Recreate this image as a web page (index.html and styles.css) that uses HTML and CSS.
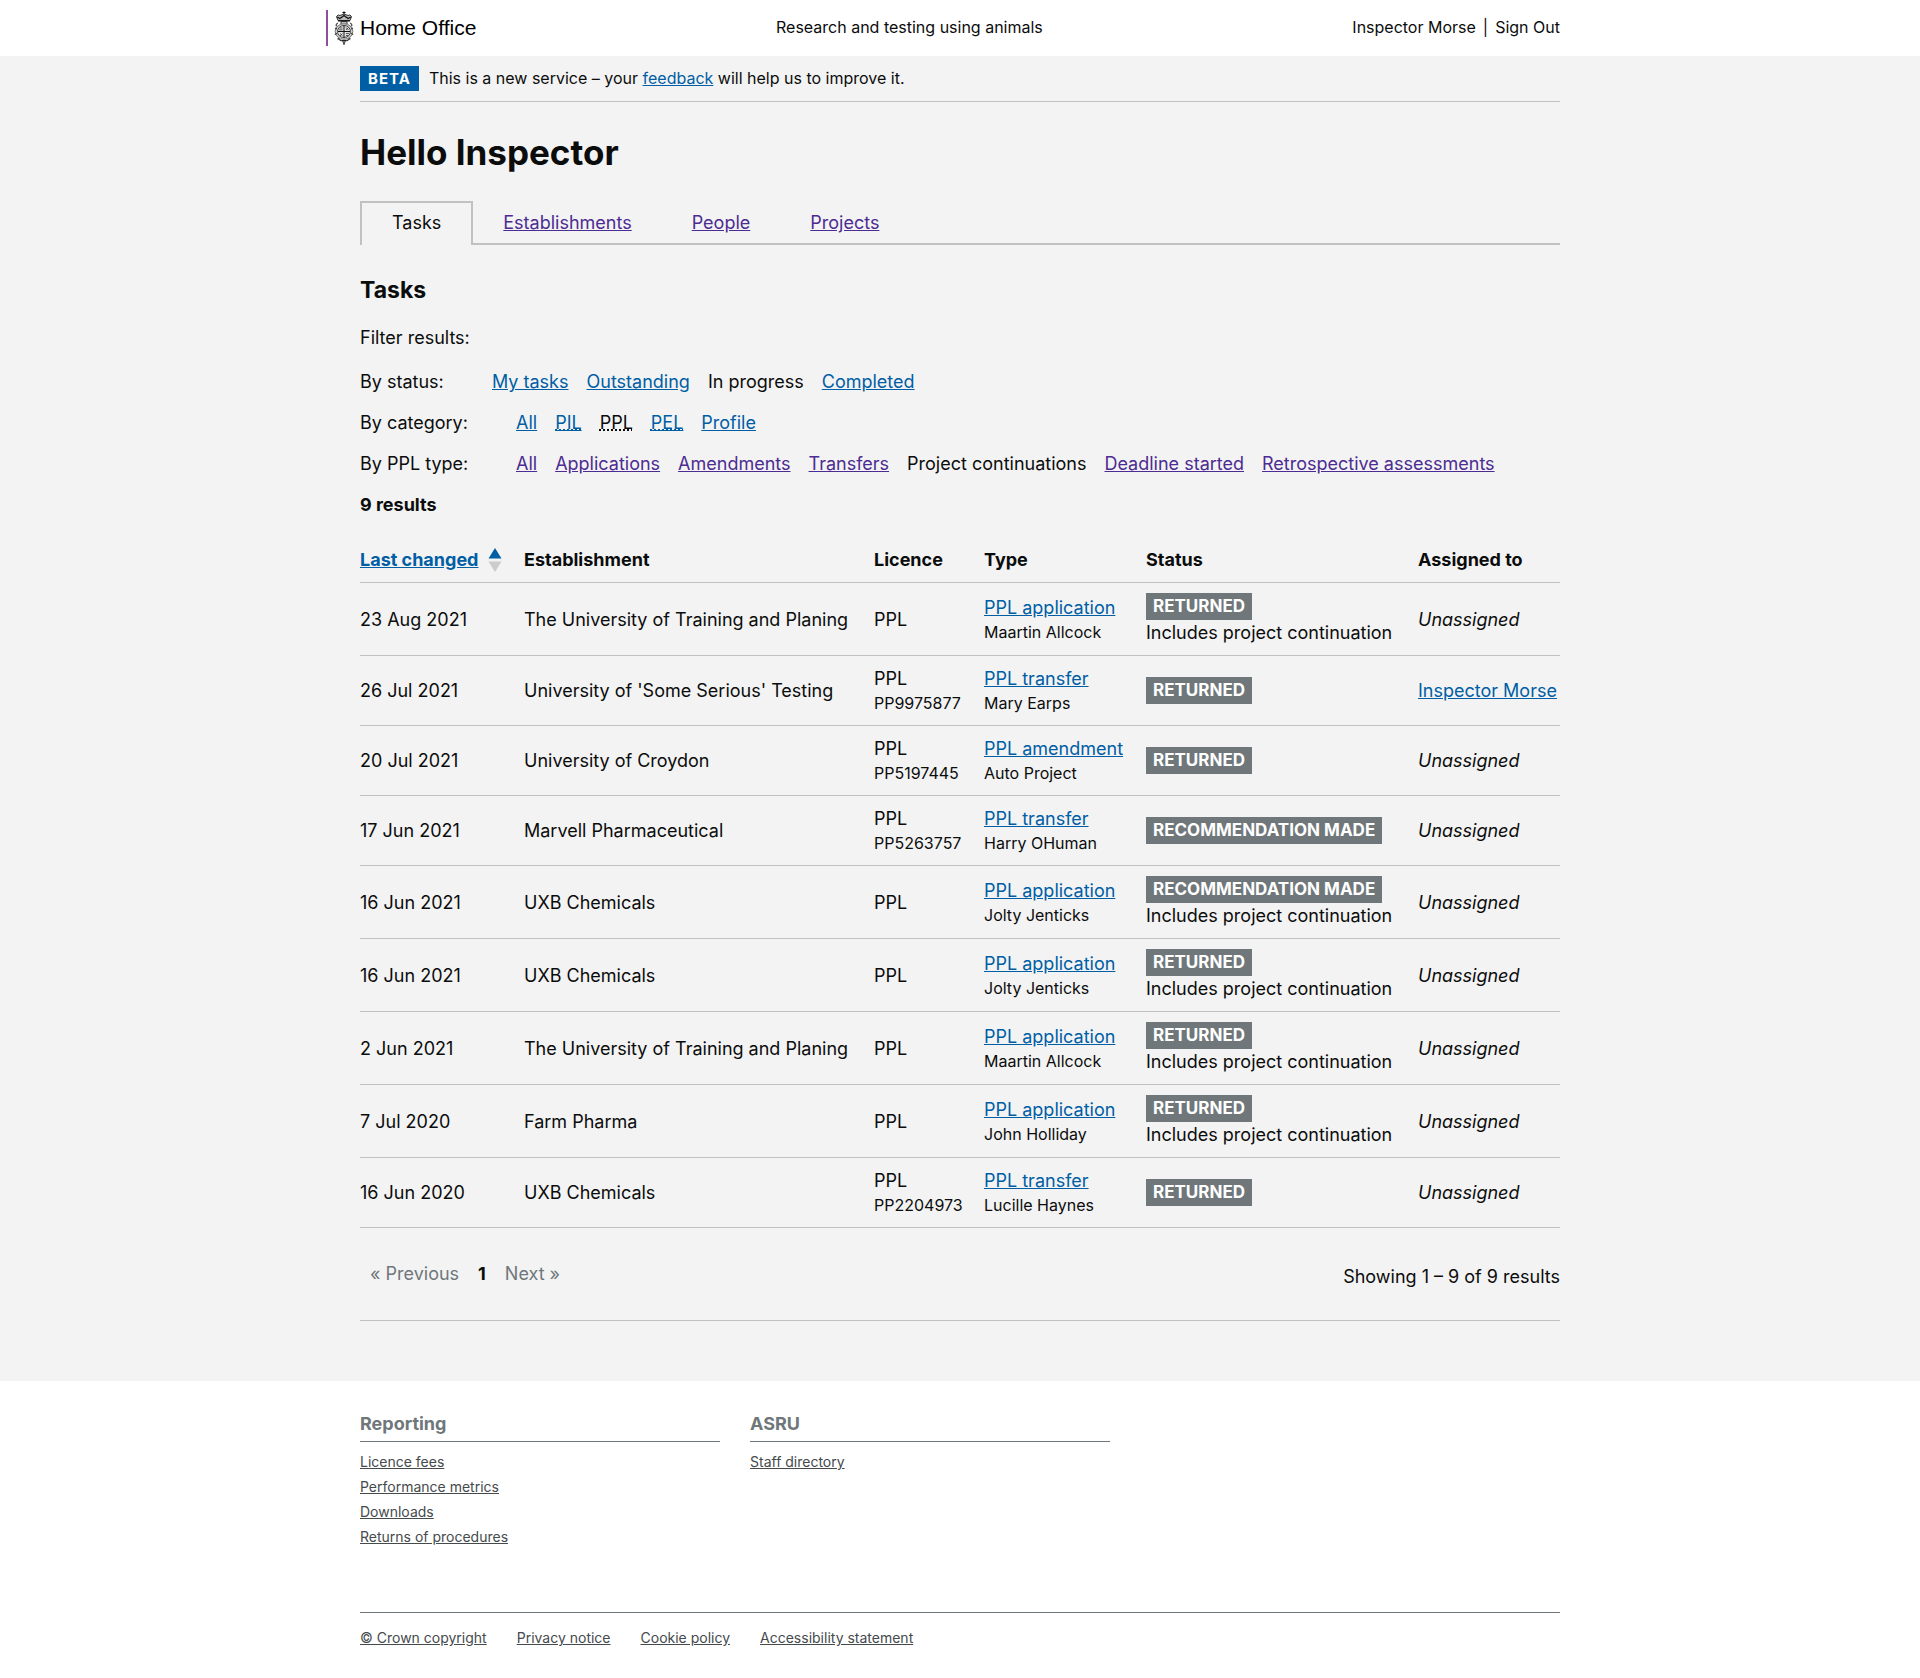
FILE: index.html
```html
<!DOCTYPE html>
<html lang="en">
<head>
<meta charset="utf-8">
<meta name="viewport" content="width=device-width, initial-scale=1">
<title>Research and testing using animals</title>
<link rel="stylesheet" href="styles.css">
</head>
<body>
<header class="masthead">
  <div class="container masthead-inner">
    <a class="logo" href="#">
      <svg class="crest" viewBox="0 0 20 34" width="20" height="34" aria-hidden="true">
        <g fill="none" stroke="#333" stroke-width="1">
          <path d="M10 .5v3M8.500 1.500h3" stroke="#000"/>
          <path d="M4 9.500 2.500 5.500Q4 3 6 4.500L10 3l4 1.500q2-1.500 3.500 1L16 9.500z" fill="#bbb"/>
          <path d="M3 6l3 1.500 4-3 4 3 3-1.500M4 9.800h12" stroke="#111" stroke-width="1.200"/>
          <path d="M7 10.500h6v3H7z" fill="#bbb"/>
          <path d="M4 12Q1.500 13 2.500 15.500M16 12q2.500 1 1.500 3.500" stroke="#555" stroke-width="1.300"/>
          <ellipse cx="10" cy="20.500" rx="8.800" ry="7.800" fill="#ccc" stroke="#777"/>
          <ellipse cx="10" cy="20.500" rx="6.500" ry="6" fill="#e4e4e4" stroke="#444"/>
          <path d="M10 14.500v12M4 20.500h12" stroke="#111"/>
          <path d="M5.500 17h3M5 18.800h3.500M12 16.500l2.500 2.500M14.500 16.500 12 19M6 22.500l2.500 2M8.500 22.500 6 25M12 22.500h3M12 24.500h2.500" stroke-width=".8"/>
          <path d="M3.500 27.500q2 .5 3 2 2-.5 3.500 2.500 1.500-3 3.500-2.500 1-1.500 3-2" stroke="#444" stroke-width="1.300"/>
          <path d="M1 17l2 1M.8 23.500l2.200-1M19 17l-2 1M19.200 23.500 17 22.500M8 29.500h4M9 33h2" stroke="#222"/>
        </g>
      </svg>
      <span>Home Office</span>
    </a>
    <a class="service-name" href="#">Research and testing using animals</a>
    <div class="account"><a href="#">Inspector Morse</a><span>|</span><a href="#">Sign Out</a></div>
  </div>
</header>

<main class="container">
  <div class="phase-banner">
    <strong class="phase-tag">BETA</strong>
    <span>This is a new service – your <a href="#">feedback</a> will help us to improve it.</span>
  </div>

  <h1>Hello Inspector</h1>

  <nav class="tabs" aria-label="Dashboard">
    <a class="tab tab-active" href="#" aria-current="page">Tasks</a>
    <a class="tab" href="#">Establishments</a>
    <a class="tab" href="#">People</a>
    <a class="tab" href="#">Projects</a>
  </nav>

  <h2>Tasks</h2>

  <section class="filters" aria-label="Filter results">
    <p class="filters-title">Filter results:</p>
    <div class="filter filter-status">
      <span class="filter-label">By status:</span>
      <a href="#">My tasks</a><a href="#">Outstanding</a><span>In progress</span><a href="#">Completed</a>
    </div>
    <div class="filter">
      <span class="filter-label">By category:</span>
      <a href="#">All</a><a href="#"><abbr title="Personal licence">PIL</abbr></a><span><abbr title="Project licence">PPL</abbr></span><a href="#"><abbr title="Establishment licence">PEL</abbr></a><a href="#">Profile</a>
    </div>
    <div class="filter filter-visited">
      <span class="filter-label">By PPL type:</span>
      <a href="#">All</a><a href="#">Applications</a><a href="#">Amendments</a><a href="#">Transfers</a><span>Project continuations</span><a href="#">Deadline started</a><a href="#">Retrospective assessments</a>
    </div>
  </section>

  <h3>9 results</h3>

  <table class="tasks">
    <colgroup>
      <col class="col-date"><col class="col-establishment"><col class="col-licence"><col class="col-type"><col class="col-status"><col>
    </colgroup>
    <thead>
      <tr>
        <th scope="col" aria-sort="ascending"><span class="sort"><a href="#">Last changed</a><svg width="14" height="24" viewBox="0 0 14 24" aria-hidden="true"><path d="M7 0l6.500 10.500H.5z" fill="#005ea5"/><path d="M.5 13.500h13L7 24z" fill="#ccc"/></svg></span></th>
        <th scope="col">Establishment</th>
        <th scope="col">Licence</th>
        <th scope="col">Type</th>
        <th scope="col">Status</th>
        <th scope="col">Assigned to</th>
      </tr>
    </thead>
    <tbody>
      <tr><td>23 Aug 2021</td><td>The University of Training and Planing</td><td>PPL</td><td><a href="#">PPL application</a><small>Maartin Allcock</small></td><td><strong class="badge">RETURNED</strong><div>Includes project continuation</div></td><td><em>Unassigned</em></td></tr>
      <tr><td>26 Jul 2021</td><td>University of 'Some Serious' Testing</td><td>PPL<small>PP9975877</small></td><td><a href="#">PPL transfer</a><small>Mary Earps</small></td><td><strong class="badge">RETURNED</strong></td><td><a href="#">Inspector Morse</a></td></tr>
      <tr><td>20 Jul 2021</td><td>University of Croydon</td><td>PPL<small>PP5197445</small></td><td><a href="#">PPL amendment</a><small>Auto Project</small></td><td><strong class="badge">RETURNED</strong></td><td><em>Unassigned</em></td></tr>
      <tr><td>17 Jun 2021</td><td>Marvell Pharmaceutical</td><td>PPL<small>PP5263757</small></td><td><a href="#">PPL transfer</a><small>Harry OHuman</small></td><td><strong class="badge">RECOMMENDATION MADE</strong></td><td><em>Unassigned</em></td></tr>
      <tr><td>16 Jun 2021</td><td>UXB Chemicals</td><td>PPL</td><td><a href="#">PPL application</a><small>Jolty Jenticks</small></td><td><strong class="badge">RECOMMENDATION MADE</strong><div>Includes project continuation</div></td><td><em>Unassigned</em></td></tr>
      <tr><td>16 Jun 2021</td><td>UXB Chemicals</td><td>PPL</td><td><a href="#">PPL application</a><small>Jolty Jenticks</small></td><td><strong class="badge">RETURNED</strong><div>Includes project continuation</div></td><td><em>Unassigned</em></td></tr>
      <tr><td>2 Jun 2021</td><td>The University of Training and Planing</td><td>PPL</td><td><a href="#">PPL application</a><small>Maartin Allcock</small></td><td><strong class="badge">RETURNED</strong><div>Includes project continuation</div></td><td><em>Unassigned</em></td></tr>
      <tr><td>7 Jul 2020</td><td>Farm Pharma</td><td>PPL</td><td><a href="#">PPL application</a><small>John Holliday</small></td><td><strong class="badge">RETURNED</strong><div>Includes project continuation</div></td><td><em>Unassigned</em></td></tr>
      <tr><td>16 Jun 2020</td><td>UXB Chemicals</td><td>PPL<small>PP2204973</small></td><td><a href="#">PPL transfer</a><small>Lucille Haynes</small></td><td><strong class="badge">RETURNED</strong></td><td><em>Unassigned</em></td></tr>
    </tbody>
  </table>

  <div class="paging">
    <nav class="pages" aria-label="Pagination"><span>« Previous</span><strong>1</strong><span>Next »</span></nav>
    <p>Showing 1 – 9 of 9 results</p>
  </div>
</main>

<footer class="footer">
  <div class="container">
    <div class="footer-columns">
      <section>
        <h4>Reporting</h4>
        <ul>
          <li><a href="#">Licence fees</a></li>
          <li><a href="#">Performance metrics</a></li>
          <li><a href="#">Downloads</a></li>
          <li><a href="#">Returns of procedures</a></li>
        </ul>
      </section>
      <section>
        <h4>ASRU</h4>
        <ul><li><a href="#">Staff directory</a></li></ul>
      </section>
    </div>
    <nav class="legal" aria-label="Legal">
      <a href="#">© Crown copyright</a>
      <a href="#">Privacy notice</a>
      <a href="#">Cookie policy</a>
      <a href="#">Accessibility statement</a>
    </nav>
  </div>
</footer>
</body>
</html>
```

FILE: styles.css
```css
* { box-sizing: border-box; }

body {
  margin: 0;
  background: #f3f3f3;
  color: #0b0c0c;
  font: 18px/25px Inter, "Open Sans", sans-serif;
}

h1, h2, h3, h4, p, ul { margin: 0; padding: 0; }
ul { list-style: none; }
a { color: #005ea5; }

.container {
  max-width: 1200px;
  margin: 0 auto;
}

/* Masthead */
.masthead {
  background: #fff;
  font-size: 16px;
}
.masthead a {
  color: inherit;
  text-decoration: none;
}
.masthead-inner {
  display: grid;
  grid-template-columns: 416px 1fr auto;
  align-items: center;
  height: 56px;
}
.masthead .logo {
  display: flex;
  align-items: center;
  gap: 6px;
  height: 36px;
  margin-left: -34px;
  padding-left: 6px;
  border-left: 2px solid #8f4f9f;
  color: #000;
  font: 21px/36px "Liberation Sans", Arial, sans-serif;
}
.crest { flex: none; }
.service-name,
.account { padding-bottom: 2px; }
.account {
  display: flex;
  gap: 7px;
}

/* Phase banner */
.phase-banner {
  display: flex;
  align-items: center;
  gap: 10px;
  padding: 10px 0;
  border-bottom: 1px solid #bfc1c3;
  font-size: 16px;
}
.phase-tag {
  padding: 0 8px;
  background: #005ea5;
  color: #fff;
  font-size: 15px;
  letter-spacing: 1px;
}

h1 {
  padding: 30px 0 29px;
  font-size: 35px;
  line-height: 40px;
}

/* Tabs */
.tabs {
  display: flex;
  border-bottom: 2px solid #bfc1c3;
}
.tab {
  padding: 9px 30px 8px;
  color: #4c2c92;
}
.tab-active {
  margin-bottom: -2px;
  padding: 7px 30px 10px;
  border: 2px solid #bfc1c3;
  border-bottom: 0;
  background: #f3f3f3;
  color: #0b0c0c;
  text-decoration: none;
}

h2 {
  padding: 30px 0 20px;
  font-size: 23px;
  line-height: 30px;
}

/* Filters */
.filters-title { margin-bottom: 19px; }
.filter {
  display: flex;
  gap: 18px;
  margin-bottom: 16px;
}
.filter-label { width: 138px; }
.filter-status .filter-label { width: 114px; }
.filter-visited a { color: #4c2c92; }

h3 {
  font-size: 18px;
  line-height: 25px;
}

/* Task list */
.tasks {
  width: 100%;
  margin-top: 20px;
  border-collapse: collapse;
}
.col-date { width: 164px; }
.col-establishment { width: 350px; }
.col-licence { width: 110px; }
.col-type { width: 162px; }
.col-status { width: 272px; }
.tasks th,
.tasks td {
  padding: 10px 20px 10px 0;
  border-bottom: 1px solid #bfc1c3;
  text-align: left;
  vertical-align: middle;
}
.tasks th:last-child,
.tasks td:last-child { padding-right: 0; }
.tasks small {
  display: block;
  font-size: 16px;
  line-height: 24px;
}
.sort {
  display: flex;
  align-items: center;
  gap: 10px;
}
.badge {
  display: block;
  width: fit-content;
  padding: 0 7px;
  background: #6f777b;
  color: #fff;
  font-size: 17px;
  line-height: 27px;
}

/* Pagination */
.paging {
  display: flex;
  justify-content: space-between;
  padding: 33px 0 31px;
  margin-bottom: 60px;
  border-bottom: 1px solid #bfc1c3;
}
.paging p { padding-top: 3px; }
.pages {
  display: flex;
  gap: 19px;
  padding-left: 10px;
  color: #6f777b;
}
.pages strong { color: #0b0c0c; }

/* Footer */
.footer {
  padding: 30px 0 29px;
  background: #fff;
  font-size: 14px;
}
.footer a { color: #454a4c; }
.footer-columns {
  display: grid;
  grid-template-columns: repeat(3, 30%);
  gap: 30px;
  margin-bottom: 63px;
}
.footer h4 {
  margin-bottom: 7px;
  padding-bottom: 5px;
  border-bottom: 1px solid #6f777b;
  color: #6f777b;
  font-size: 18px;
}
.legal {
  display: flex;
  gap: 30px;
  padding-top: 12px;
  border-top: 1px solid #6f777b;
}
```
